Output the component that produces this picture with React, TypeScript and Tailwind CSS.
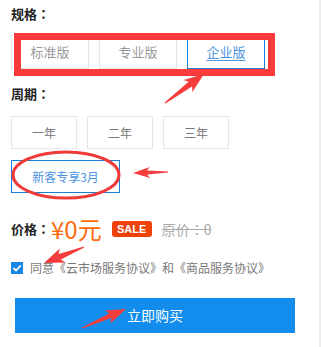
import {useState} from "react";

const font = {fontFamily: '"Noto Sans CJK SC", "Noto Sans", sans-serif'};
const colonFont = {fontFamily: '"Noto Sans CJK TC", sans-serif'};

// red annotation arrow from tail (x1,y1) to tip (x2,y2)
function arrowPoints(x1: number, y1: number, x2: number, y2: number, head = 16, hw = 14, sw = 6) {
  const dx = x2 - x1, dy = y2 - y1;
  const len = Math.hypot(dx, dy);
  const ux = dx / len, uy = dy / len;
  const nx = -uy, ny = ux;
  const p = (a: number, b: number) => `${(x1 + ux * a + nx * b).toFixed(1)},${(y1 + uy * a + ny * b).toFixed(1)}`;
  const neck = len - head;
  return [
    p(0, 0.6), p(neck, sw / 2), p(neck - 3, hw / 2), p(len, 0),
    p(neck - 3, -hw / 2), p(neck, -sw / 2), p(0, -0.6)
  ].join(" ");
}

function Label({text, className = ""}: {text: string; className?: string}) {
  return (
    <div className={`text-[13px] font-bold leading-[18px] text-[#222] ${className}`}>
      {text}<span style={colonFont}>：</span>
    </div>
  );
}

export default function App() {
  const [spec, setSpec] = useState(2);
  const [period, setPeriod] = useState(3);
  const [agree, setAgree] = useState(true);
  const specs = ["标准版", "专业版", "企业版"];
  const periods = ["一年", "二年", "三年"];

  return (
    <div className="relative w-[321px] h-[347px] bg-white border-r-2 border-[#eeeeee] overflow-hidden" style={font}>
      <div className="pl-[11px] pt-[5px]">
        <Label text="规格" />
        <div className="flex gap-[10px] mt-[12px]">
          {specs.map((s, i) => (
            <button key={s} onClick={() => setSpec(i)}
              className={`w-[78px] h-[34px] border text-[13px] ${spec === i ? "border-[#1a7fd9] text-[#4a94e0] underline decoration-1 underline-offset-[3px]" : "border-[#e6e6e6] text-[#999]"}`}>
              {s}
            </button>
          ))}
        </div>
        <Label text="周期" className="mt-[16px]" />
        <div className="flex gap-[10px] mt-[13px]">
          {periods.map((s, i) => (
            <button key={s} onClick={() => setPeriod(i)}
              className={`w-[66px] h-[33px] border text-[12px] ${period === i ? "border-[#1a7fd9] text-[#3b8ee0]" : "border-[#e6e6e6] text-[#777]"}`}>
              {s}
            </button>
          ))}
        </div>
        <button onClick={() => setPeriod(3)}
          className={`mt-[11px] w-[109px] h-[33px] border text-[12px] ${period === 3 ? "border-[#1a7fd9] text-[#4a94e0]" : "border-[#e6e6e6] text-[#777]"}`}>
          新客专享3月
        </button>
        <div className="flex items-center h-[30px] mt-[21px]">
          <span className="text-[13px] font-bold text-[#222]">价格<span style={colonFont}>：</span></span>
          <span className="text-[24px] leading-none text-[#ff6a0d] ml-[1px]">¥0元</span>
          <span className="ml-[10px] w-[40px] h-[16px] rounded-[3px] bg-[#ee4208] text-white text-[11px] font-bold leading-[16px] text-center" style={{fontFamily: '"Liberation Sans", Arial, sans-serif'}}>SALE</span>
          <span className="ml-[10px] text-[14px] text-[#aaa] line-through">原价<span style={colonFont}>：</span>0</span>
        </div>
        <label className="flex items-center mt-[15px] h-[18px] cursor-pointer">
          <input type="checkbox" className="sr-only" checked={agree} onChange={e => setAgree(e.target.checked)} />
          <span className={`w-[12px] h-[12px] flex items-center justify-center ${agree ? "bg-[#1a86e0]" : "border border-[#ccc]"}`}>
            {agree && (
              <svg width="10" height="10" viewBox="0 0 10 10">
                <path d="M1.5 5.2 L4 7.5 L8.7 2.5" stroke="white" strokeWidth="1.8" fill="none" />
              </svg>
            )}
          </span>
          <span className="ml-[7px] text-[12px] text-[#777]">同意《云市场服务协议》和《商品服务协议》</span>
        </label>
        <button className="mt-[21px] ml-[4px] w-[280px] h-[35px] bg-[#138ded] text-white text-[14px]">立即购买</button>
      </div>

      <svg className="absolute inset-0 pointer-events-none" width="321" height="347">
        <rect x="17.5" y="36.5" width="254" height="36" fill="none" stroke="#fb3b3b" strokeWidth="7" />
        <ellipse cx="66" cy="175" rx="53" ry="23" fill="none" stroke="#f03a3a" strokeWidth="3" />
        <polygon points={arrowPoints(165, 103, 204, 74, 17, 15, 6)} fill="#f53d3d" />
        <polygon points={arrowPoints(168, 172, 133, 173, 14, 11, 4)} fill="#f53d3d" />
        <polygon points={arrowPoints(84, 247, 44, 263, 17, 15, 6)} fill="#f53d3d" />
        <polygon points={arrowPoints(82, 328, 126, 309, 17, 14, 5)} fill="#f53d3d" />
      </svg>
    </div>
  );
}
